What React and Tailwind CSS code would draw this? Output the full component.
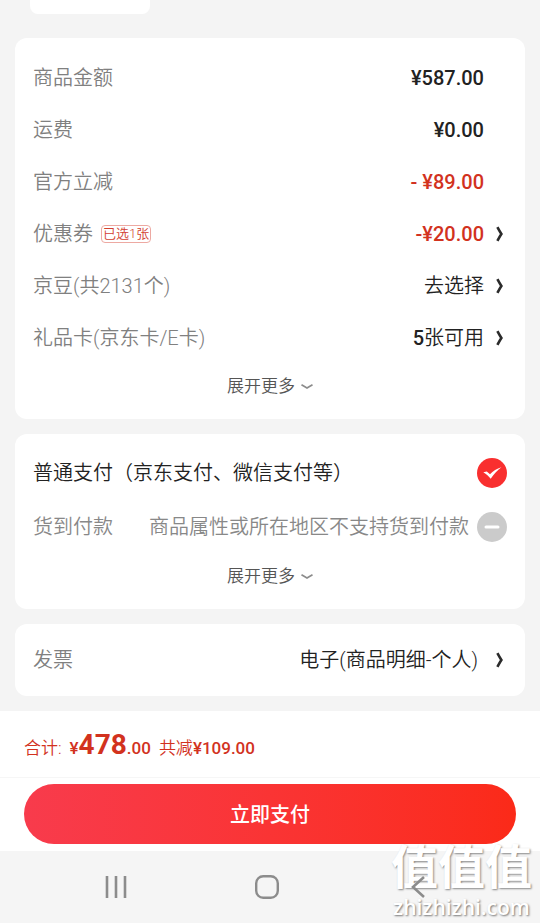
import React from 'react';

const ChevronRight = () => (
  <svg className="h-4 w-2" viewBox="0 0 8 16" fill="none" stroke="#2b2b2b" strokeWidth="2.6">
    <path d="M1.4 1.2C2.8 3.8 4 6 5.4 8C4 10 2.8 12.2 1.4 14.8" />
  </svg>
);

const ChevronDown = () => (
  <svg className="h-2 w-3" viewBox="0 0 12 8" fill="none" stroke="#8c8c8c" strokeWidth="1.7">
    <path d="M0.5 1.8C2.5 3 4.2 4 6 5C7.8 4 9.5 3 11.5 1.8" />
  </svg>
);

/**
 * White rounded panel
 */
const Card = ({ className = '', children }) => (
  <section className={`rounded-xl bg-white px-[18px] ${className}`}>{children}</section>
);

/**
 * Amount line, tappable when link is set
 */
const AmountRow = ({ label, tag, link, children }) => {
  const Value = link ? 'button' : 'div';
  return (
    <div className="flex h-[52px] items-center justify-between pr-[3px]">
      <div className="flex items-center text-[#808080]">
        <span>{label}</span>
        {tag && (
          <span className="ml-2 rounded-sm border border-[#eda9a2] px-px text-[13px] leading-4 text-[#d2402f]">
            {tag}
          </span>
        )}
      </div>
      <Value className="flex items-center text-[#222]">
        <span>{children}</span>
        <span className="ml-3 w-2">{link && <ChevronRight />}</span>
      </Value>
    </div>
  );
};

const ExpandButton = () => (
  <button className="mx-auto flex h-[46px] items-center gap-1.5 text-[17px] text-[#555]">
    展开更多
    <ChevronDown />
  </button>
);

const PayOption = ({ id, label, note, disabled, checked, className }) => (
  <div className={`flex items-center ${className}`}>
    <label htmlFor={id} className="flex flex-1 items-center justify-between">
      <span>{label}</span>
      {note && <span>{note}</span>}
    </label>
    <span className="ml-2 grid size-[30px]">
      <input
        id={id}
        type="radio"
        name="pay"
        defaultChecked={checked}
        disabled={disabled}
        className="col-start-1 row-start-1 size-[30px] appearance-none rounded-full bg-[#f92f2f] disabled:bg-[#cbcbcb]"
      />
      <svg className="pointer-events-none col-start-1 row-start-1" viewBox="0 0 30 30" fill="#fff">
        {disabled ? (
          <rect x="7.5" y="13.5" width="15" height="3" rx="1.5" />
        ) : (
          <path d="M6.3 14.3L9.8 13.4L13 16.3C16 13.2 19.8 10.7 24.4 9.3C20.2 12.6 16.8 16.2 13.7 20.8C11.8 18.3 9.4 16.2 6.3 14.3Z" />
        )}
      </svg>
    </span>
  </div>
);

const SystemNav = () => (
  <nav className="flex h-[72px] justify-center bg-[#f5f5f5] pr-1.5">
    <button aria-label="最近" className="flex w-[151px] items-center justify-center">
      <svg className="size-6" viewBox="0 0 24 24" stroke="#8c8c8c" strokeWidth="2.6">
        <path d="M3 1V23M12 1V23M21 1V23" />
      </svg>
    </button>
    <button aria-label="主页" className="flex w-[151px] items-center justify-center">
      <svg className="size-6" viewBox="0 0 24 24" fill="none" stroke="#8c8c8c" strokeWidth="2.4">
        <rect x="1.2" y="1.2" width="21.6" height="21.6" rx="7" />
      </svg>
    </button>
    <button aria-label="返回" className="relative z-10 flex w-[151px] items-center justify-center">
      <svg className="size-6" viewBox="0 0 24 24" fill="none" stroke="#8c8c8c" strokeWidth="2.6">
        <path d="M18 2L7 12L18 22" />
      </svg>
    </button>
  </nav>
);

export default function App() {
  return (
    <div className="relative flex min-h-screen flex-col bg-[#f4f4f4] font-[Roboto,'Noto_Sans_CJK_SC',sans-serif] text-xl font-[350]">
      <div className="ml-[30px] h-3.5 w-[120px] rounded-b-lg bg-white" />

      <main className="flex flex-1 flex-col gap-[15px] px-[15px] pt-6 pb-[15px]">
        <Card className="pt-3.5 pb-[9px]">
          <AmountRow label="商品金额">
            <span className="font-medium">¥587.00</span>
          </AmountRow>
          <AmountRow label="运费">
            <span className="font-medium">¥0.00</span>
          </AmountRow>
          <AmountRow label="官方立减">
            <span className="font-medium text-[#d2321e]">- ¥89.00</span>
          </AmountRow>
          <AmountRow label="优惠券" tag="已选1张" link>
            <span className="font-medium text-[#d2321e]">-¥20.00</span>
          </AmountRow>
          <AmountRow label="京豆(共2131个)" link>
            去选择
          </AmountRow>
          <AmountRow label="礼品卡(京东卡/E卡)" link>
            <span className="font-medium">5</span>张可用
          </AmountRow>
          <ExpandButton />
        </Card>

        <Card className="pt-3 pb-[9px]">
          <PayOption
            id="pay-online"
            label="普通支付（京东支付、微信支付等）"
            checked
            className="h-[54px] text-[#222]"
          />
          <PayOption
            id="pay-cod"
            label="货到付款"
            note="商品属性或所在地区不支持货到付款"
            disabled
            className="h-[54px] text-[#888]"
          />
          <ExpandButton />
        </Card>

        <Card className="py-2.5">
          <div className="flex h-[52px] items-center justify-between pr-[3px]">
            <span className="text-[#808080]">发票</span>
            <button className="flex items-center gap-[18px] text-[#222]">
              电子(商品明细-个人)
              <ChevronRight />
            </button>
          </div>
        </Card>
      </main>

      <footer className="bg-white">
        <p className="flex h-[67px] items-baseline border-b border-[#f6f6f6] px-6 pt-3.5 text-[17px] text-[#d2321e]">
          <span>合计:</span>
          <span className="ml-2 font-medium">¥</span>
          <span className="text-[28px] font-bold">478</span>
          <span className="font-medium">.00</span>
          <span className="ml-2">
            共减<span className="font-medium">¥109.00</span>
          </span>
        </p>
        <div className="px-6 pt-1.5 pb-[7px]">
          <button className="h-[60px] w-full rounded-full bg-linear-to-r from-[#f83b4c] via-[#fa3434] to-[#fb2a18] pt-0.5 font-medium text-white">
            立即支付
          </button>
        </div>
      </footer>

      <SystemNav />

      <div className="pointer-events-none absolute right-2 bottom-1 flex flex-col items-center gap-1 text-white">
        <span className="text-[47px] leading-[46px] font-bold [text-shadow:1px_1px_2px_#888]">
          值值值
        </span>
        <span className="font-['Open_Sans',sans-serif] text-[21px] leading-6 font-semibold [text-shadow:1px_1px_2px_#777]">
          zhizhizhi.com
        </span>
      </div>
    </div>
  );
}
